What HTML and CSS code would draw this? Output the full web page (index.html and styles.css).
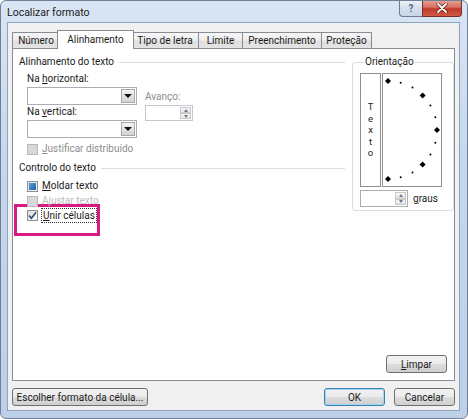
FILE: index.html
```html
<!DOCTYPE html>
<html lang="pt">
<head>
  <meta charset="UTF-8" />
  <title>Localizar formato</title>
  <link rel="stylesheet" href="styles.css">
</head>
<body>
  <div class="window">
    <div class="titlebar">
      <span class="title">Localizar formato</span>
      <div class="caption-buttons">
        <span class="cap-btn help">?</span>
        <span class="cap-btn close">
          <svg width="12" height="10" viewBox="0 0 12 10">
            <path d="M2 1 L10 9 M10 1 L2 9" stroke="#5a1a14" stroke-width="3.2" stroke-linecap="round"/>
            <path d="M2 1 L10 9 M10 1 L2 9" stroke="#fff" stroke-width="1.8" stroke-linecap="round"/>
          </svg>
        </span>
      </div>
    </div>

    <div class="client">
      <div class="tabs">
        <span class="tab tab-num">Número</span>
        <span class="tab active">Alinhamento</span>
        <span class="tab tab-font">Tipo de letra</span>
        <span class="tab tab-border">Limite</span>
        <span class="tab tab-fill">Preenchimento</span>
        <span class="tab tab-prot">Proteção</span>
      </div>

      <div class="panel">
        <div class="panel-body">
          <div class="left-col">
            <div class="group-title">Alinhamento do texto</div>
            <div class="fields">
              <div class="field-col">
                <label class="field">Na <u>h</u>orizontal:</label>
                <div class="combo"><span class="drop"><i class="tri-down"></i></span></div>
                <label class="field">Na <u>v</u>ertical:</label>
                <div class="combo"><span class="drop"><i class="tri-down"></i></span></div>
              </div>
              <div class="indent-col">
                <label class="field disabled">Avanço:</label>
                <div class="spin">
                  <span class="arrows"><i class="up"></i><i class="down"></i></span>
                </div>
              </div>
            </div>
            <div class="check disabled just"><span class="box"></span><span><u>J</u>ustificar distribuído</span></div>

            <div class="group-title ctrl">Controlo do texto</div>
            <div class="check wrap"><span class="box mixed"><i></i></span><span><u>M</u>oldar texto</span></div>
            <div class="check disabled faint shrink"><span class="box"></span><span>Ajustar texto</span></div>
            <div class="highlight">
              <div class="check">
                <span class="box">
                  <svg width="9" height="9" viewBox="0 0 9 9"><path d="M1 4.5 L3.4 7.2 L8 1.2" fill="none" stroke="#27466f" stroke-width="1.5"/></svg>
                </span>
                <span class="focus"><u>U</u>nir células</span>
              </div>
            </div>
          </div>

          <fieldset class="orient">
            <legend>Orientação</legend>
            <div class="orient-row">
              <div class="vtext"><span>T</span><span>e</span><span>x</span><span>t</span><span>o</span></div>
              <div class="dial">
                <svg width="58" height="112" viewBox="0 0 58 112">
                  <g fill="#000">
                    <path d="M5 4 L8 7 L5 10 L2 7 Z"/>
                    <circle cx="17.7" cy="8.7" r="1"/>
                    <circle cx="29.5" cy="13.6" r="1"/>
                    <path d="M39.6 18.4 L42.6 21.4 L39.6 24.4 L36.6 21.4 Z"/>
                    <circle cx="47.4" cy="31.5" r="1"/>
                    <circle cx="52.3" cy="43.3" r="1"/>
                    <path d="M54 53 L57 56 L54 59 L51 56 Z"/>
                    <circle cx="52.3" cy="68.7" r="1"/>
                    <circle cx="47.4" cy="80.5" r="1"/>
                    <path d="M39.6 87.6 L42.6 90.6 L39.6 93.6 L36.6 90.6 Z"/>
                    <circle cx="29.5" cy="98.4" r="1"/>
                    <circle cx="17.7" cy="103.3" r="1"/>
                    <path d="M5 102 L8 105 L5 108 L2 105 Z"/>
                  </g>
                </svg>
              </div>
            </div>
            <div class="degrees">
              <div class="spin">
                <span class="arrows"><i class="up"></i><i class="down"></i></span>
              </div>
              <span><u>g</u>raus</span>
            </div>
          </fieldset>
        </div>

        <div class="panel-foot">
          <button class="btn btn-clear"><u>L</u>impar</button>
        </div>
      </div>

      <div class="footer">
        <button class="btn btn-pick">Escolher formato da célula...</button>
        <button class="btn btn-ok">OK</button>
        <button class="btn btn-cancel">Cancelar</button>
      </div>
    </div>
  </div>
</body>
</html>
```

FILE: styles.css
```css
body {
  margin: 0;
  font-family: Roboto, "Noto Sans", sans-serif;
  font-size: 10px;
  color: #1b1b1b;
}

u {
  text-decoration-thickness: 1px;
  text-underline-offset: 1px;
}

/* window frame */
.window {
  width: 468px;
  height: 419px;
  box-sizing: border-box;
  border: 1px solid #6f8098;
  border-radius: 6px;
  background: linear-gradient(#d9e5f3, #c5d7ec 40%, #bdd0e7);
  display: flex;
  flex-direction: column;
  overflow: hidden;
}

.titlebar {
  height: 21px;
  display: flex;
  align-items: flex-start;
  padding-left: 6px;
}

.title {
  line-height: 24px;
  font-size: 10.5px;
  color: #1a1a1a;
}

.caption-buttons {
  margin-left: auto;
  margin-right: 5px;
  margin-top: -1px;
  display: flex;
}

.cap-btn {
  height: 17px;
  box-sizing: border-box;
  border: 1px solid #6a7b92;
  border-top: none;
  display: flex;
  align-items: center;
  justify-content: center;
}

.help {
  width: 23px;
  border-radius: 0 0 0 4px;
  border-right: none;
  background: linear-gradient(#eef3f9, #d5e0ee 50%, #c7d5e7);
  color: #54698a;
  font-weight: bold;
  font-size: 10px;
}

.close {
  width: 40px;
  border-radius: 0 0 4px 0;
  border-color: #7b2d26;
  background: linear-gradient(#e8a595, #d4705f 45%, #c23a2b 55%, #cf5a45);
}

/* dialog client area */
.client {
  flex: 1;
  margin: 0 7px 7px 6px;
  background: #f0f0f0;
  border: 1px solid #8ea3bd;
  display: flex;
  flex-direction: column;
  padding: 7px 4px 4px;
}

.tabs {
  display: flex;
  align-items: flex-end;
  height: 19px;
  margin-bottom: -1px;
  position: relative;
  z-index: 1;
}

.tab {
  height: 16px;
  margin-bottom: 1px;
  box-sizing: border-box;
  border: 1px solid #898c95;
  border-bottom: none;
  margin-left: -1px;
  background: linear-gradient(#f7f7f7, #ebebeb 50%, #dedede 51%, #e4e4e4);
  line-height: 15px;
  text-align: center;
}

.tab-num { width: 48px; margin-left: 0; }
.tab-font { width: 68px; }
.tab-border { width: 45px; }
.tab-fill { width: 80px; }
.tab-prot { width: 51px; }

.tab.active {
  width: 77px;
  height: 19px;
  margin: 0 -2px 0 -3px;
  background: #fff;
  line-height: 17px;
  position: relative;
  z-index: 1;
}

.panel {
  flex: 1;
  background: #fff;
  border: 1px solid #898c95;
  display: flex;
  flex-direction: column;
}

.panel-body {
  flex: 1;
  display: flex;
  align-items: flex-start;
  padding: 7px 0 0 6px;
}

.left-col {
  width: 326px;
}

.group-title {
  display: flex;
  align-items: center;
  height: 12px;
  line-height: 12px;
}

.group-title::after {
  content: "";
  flex: 1;
  border-top: 1px solid #d5dfe5;
  margin-left: 5px;
  margin-top: 1px;
}

.fields {
  display: flex;
  padding-left: 8px;
  margin-top: 5px;
}

.field-col {
  width: 110px;
}

.field {
  display: block;
  height: 12px;
  line-height: 12px;
  margin-bottom: 2px;
}

.disabled {
  color: #8d8d8d;
}

.faint {
  color: #bcbcbc;
}

.combo {
  height: 18px;
  box-sizing: border-box;
  border: 1px solid #abadb3;
  background: #fff;
  display: flex;
  justify-content: flex-end;
  padding: 1px;
  margin-bottom: 1px;
}

.drop {
  width: 14px;
  box-sizing: border-box;
  border: 1px solid #a7a7a7;
  background: linear-gradient(#f4f4f4, #e2e2e2 50%, #d3d3d3);
  display: flex;
  align-items: center;
  justify-content: center;
}

.tri-down {
  width: 0;
  height: 0;
  border-left: 4px solid transparent;
  border-right: 4px solid transparent;
  border-top: 4px solid #111;
}

.indent-col {
  margin-left: 8px;
  padding-top: 18px;
}

.spin {
  width: 48px;
  height: 16px;
  box-sizing: border-box;
  border: 1px solid #c5c7cc;
  background: #fff;
  display: flex;
  justify-content: flex-end;
  padding: 1px;
}

.arrows {
  width: 11px;
  display: flex;
  flex-direction: column;
}

.arrows i {
  flex: 1;
  box-sizing: border-box;
  border: 1px solid #c9c9c9;
  background: linear-gradient(#f6f6f6, #e4e4e4);
  display: flex;
  align-items: center;
  justify-content: center;
}

.arrows i::after {
  content: "";
  border-left: 2.5px solid transparent;
  border-right: 2.5px solid transparent;
}

.arrows .up::after { border-bottom: 3px solid #6a7a90; }
.arrows .down::after { border-top: 3px solid #6a7a90; }

/* check boxes */
.check {
  display: flex;
  align-items: center;
  gap: 4px;
  height: 12px;
  line-height: 12px;
  padding-left: 8px;
  white-space: nowrap;
}

.box {
  width: 11px;
  height: 11px;
  flex-shrink: 0;
  box-sizing: border-box;
  border: 1px solid #8e8f8f;
  background: linear-gradient(135deg, #dcdcdc, #fbfbfb);
  display: flex;
  align-items: center;
  justify-content: center;
}

.disabled .box {
  border-color: #b8b8b8;
  background: #d8d8d8;
}

.box.mixed i {
  width: 7px;
  height: 7px;
  background: linear-gradient(135deg, #5aa0dc, #1f5fa8);
}

.just { margin-top: 4px; }
.ctrl { margin-top: 7px; }
.wrap { margin-top: 6px; }
.shrink { margin-top: 3px; }

.highlight {
  width: 86px;
  height: 32px;
  box-sizing: border-box;
  border: 3px solid #d8197f;
  margin: -3px 0 0 -5px;
  padding: 2px 0 0 2px;
}

.focus {
  outline: 1px dotted #333;
  outline-offset: 0;
  padding: 0 1px;
  line-height: 13px;
}

/* orientation group */
.orient {
  width: 102px;
  height: 155px;
  box-sizing: border-box;
  margin: 0 0 0 7px;
  padding: 0 7px;
  border: 1px solid #d5dfe5;
  border-radius: 3px;
}

.orient legend {
  padding: 0 1px;
  margin-left: 4px;
  line-height: 12px;
}

.orient-row {
  display: flex;
  gap: 1px;
  margin-top: 5px;
}

.vtext {
  width: 21px;
  height: 114px;
  box-sizing: border-box;
  border: 1px solid #8e8f8f;
  display: flex;
  flex-direction: column;
  align-items: center;
  justify-content: center;
  line-height: 11.4px;
  font-size: 9.5px;
}

.dial {
  width: 60px;
  height: 114px;
  box-sizing: border-box;
  border: 1px solid #8e8f8f;
}

.dial svg {
  display: block;
}

.degrees {
  display: flex;
  align-items: center;
  gap: 5px;
  margin-top: 3px;
}

.degrees .spin {
  height: 17px;
  border-color: #abadb3;
}

/* buttons */
.btn {
  height: 18px;
  box-sizing: border-box;
  border: 1px solid #707070;
  border-radius: 3px;
  background: linear-gradient(#f2f2f2, #ebebeb 50%, #dddddd 51%, #cfcfcf);
  font-family: inherit;
  font-size: 10px;
  color: #1b1b1b;
  padding: 0;
  line-height: 15px;
}

.panel-foot {
  display: flex;
  justify-content: flex-end;
  padding: 0 7px 7px;
}

.btn-clear { width: 61px; }

.footer {
  display: flex;
  margin-top: 7px;
}

.btn-pick { width: 136px; }

.btn-ok {
  width: 61px;
  margin-left: auto;
  border-color: #3c7fb1;
  box-shadow: inset 0 0 0 1px #9fd5f5;
}

.btn-cancel {
  width: 61px;
  margin-left: 9px;
}
```
